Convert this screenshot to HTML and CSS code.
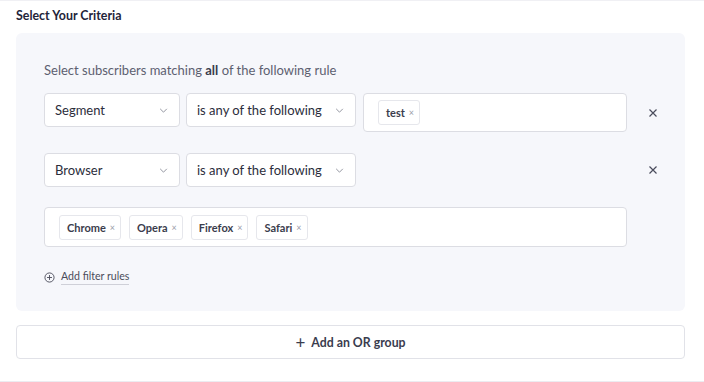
FILE: index.html
```html
<!DOCTYPE html>
<html>
<head>
<meta charset="utf-8">
<link rel="stylesheet" href="styles.css">
</head>
<body>
<div class="frame">
  <h2 class="title">Select Your Criteria</h2>
  <div class="panel">
    <p class="intro">Select subscribers matching <b>all</b> of the following rule</p>

    <div class="rule">
      <div class="select field-key"><span>Segment</span><svg class="chev" viewBox="0 0 10 6"><path d="M1 1l4 4 4-4"/></svg></div>
      <div class="select field-op"><span>is any of the following</span><svg class="chev" viewBox="0 0 10 6"><path d="M1 1l4 4 4-4"/></svg></div>
      <div class="tagbox inline">
        <span class="tag">test <i class="tx">×</i></span>
      </div>
      <button class="remove" aria-label="remove"><svg viewBox="0 0 10 10"><path d="M1.5 1.5l7 7M8.5 1.5l-7 7"/></svg></button>
    </div>

    <div class="rule second">
      <div class="select field-key"><span>Browser</span><svg class="chev" viewBox="0 0 10 6"><path d="M1 1l4 4 4-4"/></svg></div>
      <div class="select field-op"><span>is any of the following</span><svg class="chev" viewBox="0 0 10 6"><path d="M1 1l4 4 4-4"/></svg></div>
      <div class="spacer"></div>
      <button class="remove" aria-label="remove"><svg viewBox="0 0 10 10"><path d="M1.5 1.5l7 7M8.5 1.5l-7 7"/></svg></button>
    </div>

    <div class="tagbox full">
      <span class="tag">Chrome <i class="tx">×</i></span>
      <span class="tag">Opera <i class="tx">×</i></span>
      <span class="tag">Firefox <i class="tx">×</i></span>
      <span class="tag">Safari <i class="tx">×</i></span>
    </div>

    <div class="add-filter">
      <svg class="circ" viewBox="0 0 12 12"><circle cx="6" cy="6" r="5"/><path d="M6 3.3v5.4M3.3 6h5.4"/></svg>
      <span class="link">Add filter rules</span>
    </div>
  </div>

  <button class="or-btn"><span class="plus">+</span> Add an OR group</button>
</div>
</body>
</html>
```

FILE: styles.css
```css
* { box-sizing: border-box; }
html, body { margin: 0; padding: 0; background: #fff; }
body { font-family: Lato, "Open Sans", sans-serif; color: #2e3040; }

.frame {
  height: 382px;
  border-top: 1px solid #f0f0f4;
  border-bottom: 1px solid #ececf1;
  padding: 0 19px 0 16px;
}

.title {
  margin: 0;
  padding-top: 8px;
  font-size: 12.4px;
  line-height: 14px;
  font-weight: 700;
  color: #23243a;
}

.panel {
  margin-top: 10px;
  background: #f6f7fb;
  border-radius: 6px;
  padding: 29px 0 26px 28px;
}

.intro {
  margin: 0;
  font-size: 13px;
  line-height: 16px;
  color: #5d6070;
}
.intro b { font-weight: 700; color: #3a3c4c; }

.rule {
  display: flex;
  align-items: flex-start;
  margin-top: 15px;
}
.rule.second { margin-top: 21px; align-items: center; }

.select {
  height: 34px;
  background: #fff;
  border: 1px solid #dcdde3;
  border-radius: 4px;
  display: flex;
  align-items: center;
  justify-content: space-between;
  padding: 0 11px 0 10px;
  font-size: 13px;
  color: #2b2d3b;
}
.field-key { width: 136px; }
.field-op { width: 170px; margin-left: 6px; }

.chev {
  width: 9px;
  height: 5px;
  fill: none;
  stroke: #8a8c98;
  stroke-width: 1.1;
}

.tagbox {
  background: #fff;
  border: 1px solid #dcdde3;
  border-radius: 4px;
  display: flex;
  align-items: center;
  gap: 8px;
  padding: 0 14px;
}
.tagbox.inline { width: 264px; height: 39px; margin-left: 7px; }
.tagbox.full { margin-top: 20px; margin-right: 58px; height: 40px; }

.spacer { width: 264px; margin-left: 7px; }

.tag {
  display: inline-flex;
  align-items: center;
  height: 25px;
  padding: 0 5px 0 7px;
  background: #fff;
  border: 1px solid #e6e7ec;
  border-radius: 3px;
  font-size: 11px;
  font-weight: 700;
  color: #3b3d4d;
}
.tx {
  font-style: normal;
  font-weight: 400;
  font-size: 9px;
  color: #9a9ca8;
  margin-left: 4px;
}

.remove {
  margin-left: 20px;
  width: 12px;
  height: 12px;
  padding: 0;
  border: 0;
  background: none;
  align-self: center;
  display: flex;
}
.remove svg {
  width: 10px;
  height: 10px;
  margin: 1px;
  fill: none;
  stroke: #4a4c5c;
  stroke-width: 1.2;
}

.add-filter {
  margin-top: 22px;
  display: flex;
  align-items: center;
  font-size: 10.6px;
  line-height: 16px;
  color: #4a4c5a;
}
.circ {
  width: 11px;
  height: 11px;
  fill: none;
  stroke: #4a4c5a;
  stroke-width: 1;
  margin-right: 6px;
}
.link {
  border-bottom: 1px solid #cfd0d8;
  line-height: 15px;
}

.or-btn {
  display: flex;
  align-items: center;
  justify-content: center;
  width: 100%;
  height: 34px;
  margin-top: 14px;
  background: #fff;
  border: 1px solid #e1e2e8;
  border-radius: 4px;
  font-family: Lato, "Open Sans", sans-serif;
  font-size: 12.3px;
  font-weight: 700;
  color: #3a3c4e;
  padding: 0;
}
.plus {
  font-size: 17px;
  font-weight: 400;
  margin-right: 6px;
  line-height: 1;
}
```
